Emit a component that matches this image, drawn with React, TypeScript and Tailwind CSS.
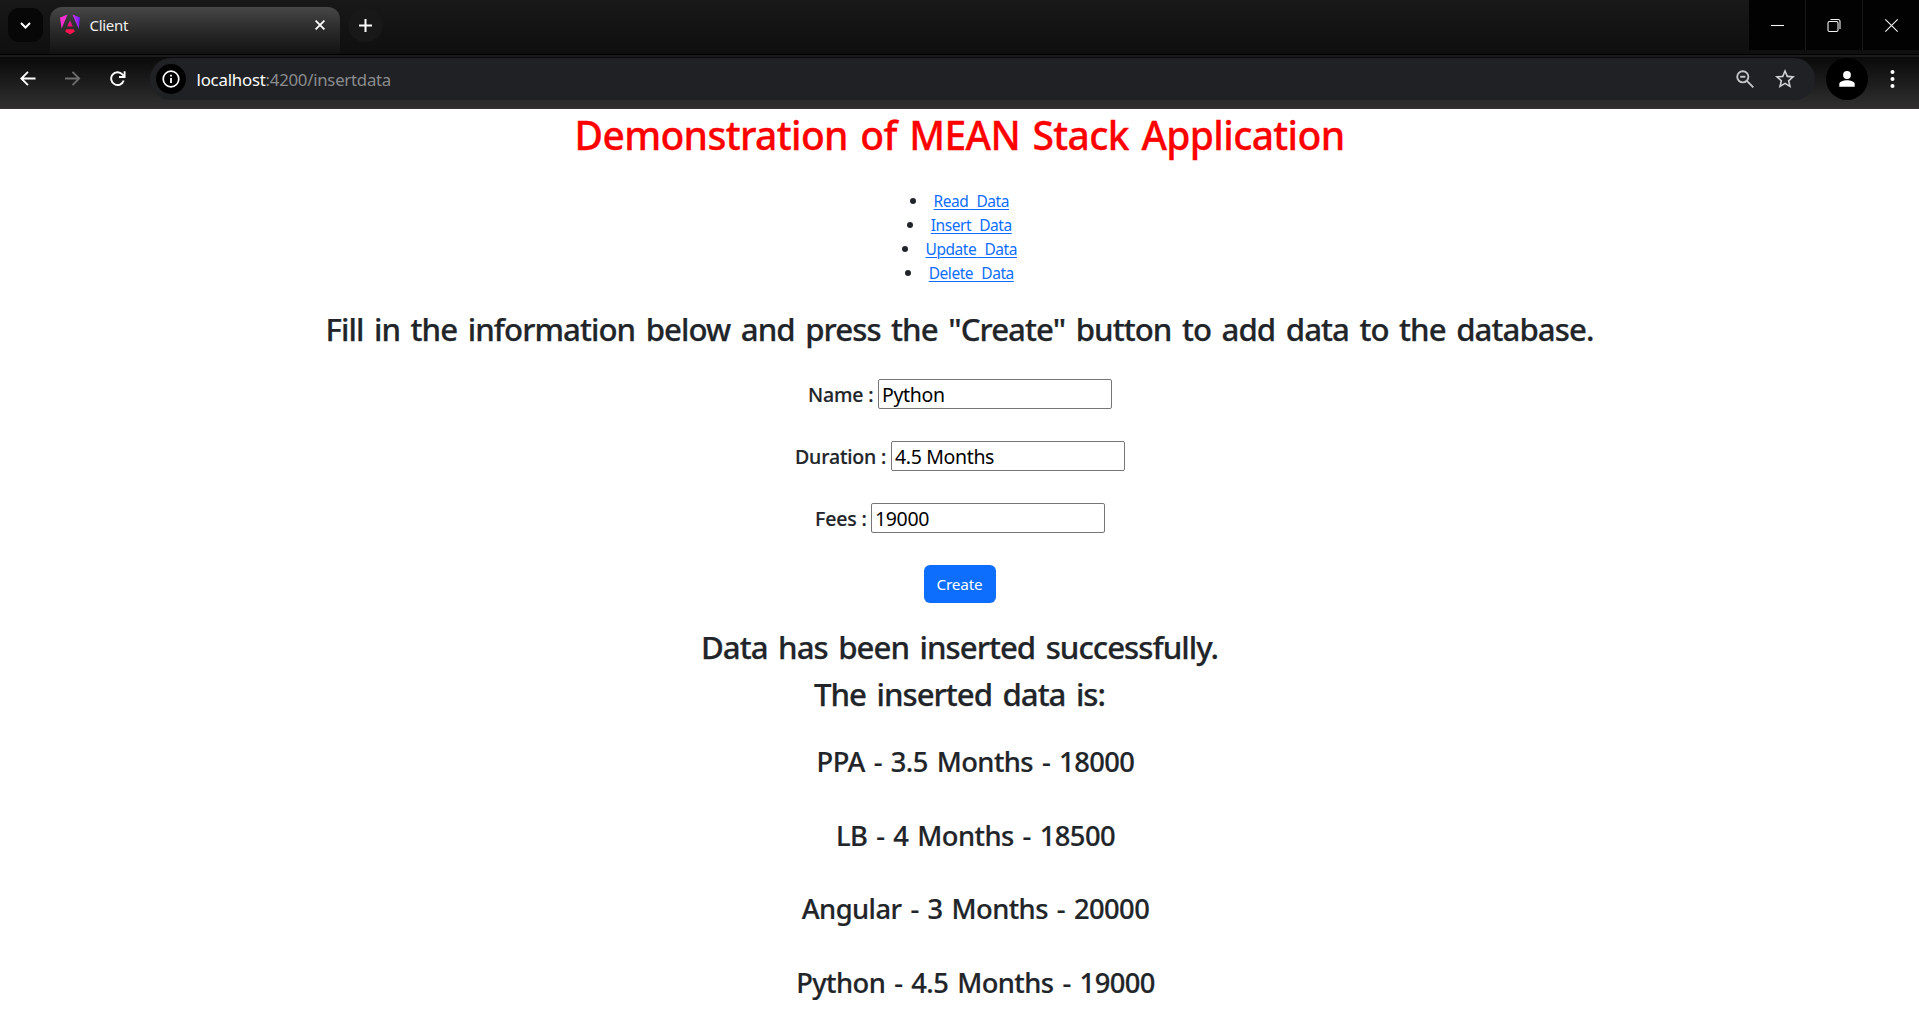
import type { ReactNode } from "react";

function AngularLogo() {
  return (
    <svg className="h-[21px] w-[20px] shrink-0" viewBox="0 0 20 21">
      <defs>
        <linearGradient id="ng" x1="0" y1="0.5" x2="1" y2="0.3">
          <stop offset="0" stopColor="#f62ccb" />
          <stop offset="0.4" stopColor="#b02ff0" />
          <stop offset="1" stopColor="#6a1bff" />
        </linearGradient>
        <linearGradient id="ngr" x1="0" y1="0" x2="0" y2="1">
          <stop offset="0" stopColor="#e81fb0" />
          <stop offset="1" stopColor="#ff0a6c" />
        </linearGradient>
      </defs>
      <path d="M0 3.6L7.6 0.4L1.6 14.6Z" fill="#f62fd0" />
      <path d="M12.4 0.4L20 3.6L18.8 15Z" fill="url(#ng)" />
      <path d="M10 6.4L12.8 12.6H7.2Z" fill="url(#ngr)" />
      <path d="M6.2 15.2H13.8L14.8 17.6L10 20.6L5.2 17.6Z" fill="#ff1450" />
    </svg>
  );
}

function TabStrip() {
  return (
    <div className="flex h-[54px] bg-gradient-to-b from-[#181818] to-[#0f0f0f]">
      <div className="ml-2 mt-2 flex h-[34px] w-[35px] items-center justify-center rounded-[11px] bg-[#070707]">
        <svg className="h-[7px] w-[11px]" viewBox="0 0 11 7" fill="none" stroke="#fff" strokeWidth="2">
          <path d="M1 1L5.5 5.5L10 1" />
        </svg>
      </div>
      <div className="ml-[7px] mt-[7px] flex h-[47px] w-[290px] items-start rounded-t-[12px] bg-gradient-to-b from-[#474747] via-[#2a2a2a] to-[#121212] pl-[10px] pt-[7px]">
        <AngularLogo />
        <span className="ml-[9.5px] text-[15px] leading-[22px] tracking-[-0.3px] text-[#f1f1f1]">Client</span>
        <svg className="ml-auto mr-[15px] mt-[6px] h-[10px] w-[10px]" viewBox="0 0 10 10" stroke="#fff" strokeWidth="1.8">
          <path d="M0.6 0.6L9.4 9.4M9.4 0.6L0.6 9.4" />
        </svg>
      </div>
      <div className="ml-2 mt-2 flex h-[34px] w-[35px] items-center justify-center rounded-full bg-[#181818]">
        <svg className="h-[13px] w-[13px]" viewBox="0 0 13 13" stroke="#fff" strokeWidth="2">
          <path d="M6.5 0V13M0 6.5H13" />
        </svg>
      </div>
      <div className="ml-auto flex h-[50px] gap-px bg-[#171717]">
        <WindowButton>
          <path d="M0 6.5H13" />
        </WindowButton>
        <WindowButton>
          <rect x="0" y="2.5" width="10" height="10" rx="1.5" />
          <path d="M2.5 0.5H10A2 2 0 0 1 12 2.5V10" />
        </WindowButton>
        <WindowButton>
          <path d="M0.3 0.3L12.7 12.7M12.7 0.3L0.3 12.7" />
        </WindowButton>
      </div>
    </div>
  );
}

function WindowButton({ children }: { children: ReactNode }) {
  return (
    <div className="flex h-[50px] w-[56px] items-center justify-center bg-[#020202]">
      <svg className="h-[13px] w-[13px] overflow-visible" viewBox="0 0 13 13" fill="none" stroke="#f4f4f4" strokeWidth="1.1">
        {children}
      </svg>
    </div>
  );
}

function Toolbar() {
  return (
    <div className="flex h-[52px] items-start border-b border-[#3b3636] bg-gradient-to-b from-[#0a0a0a] to-[#303030]">
      <svg className="ml-5 mt-[14px] h-[15px] w-[16px]" viewBox="0 0 16 15" fill="none" stroke="#fff" strokeWidth="1.8">
        <path d="M15.5 7.5H1.5M8 0.8L1.3 7.5L8 14.2" />
      </svg>
      <svg className="ml-[29px] mt-[14px] h-[15px] w-[16px]" viewBox="0 0 16 15" fill="none" stroke="#6e6e6e" strokeWidth="1.8">
        <path d="M0 7.5H14M7.5 0.8L14.2 7.5L7.5 14.2" />
      </svg>
      <svg className="ml-[29px] mt-[14px] h-[16px] w-[16px]" viewBox="0 0 16 16" fill="none" stroke="#fff" strokeWidth="1.9">
        <path d="M13.7 9.5A6.4 6.4 0 1 1 12.4 3.4L14.3 5.4" />
        <path d="M14.6 0.3V6H9" />
      </svg>
      <div className="ml-[24px] mt-px flex h-[42px] w-[1665px] items-center rounded-full bg-[#202124] pl-[6px]">
        <div className="flex h-[30px] w-[30px] items-center justify-center rounded-full bg-black">
          <svg className="h-[18px] w-[18px]" viewBox="0 0 18 18" fill="none" stroke="#fff" strokeWidth="1.7">
            <circle cx="9" cy="9" r="7.8" />
            <path d="M9 8V13M9 4.8V6.6" strokeWidth="1.8" />
          </svg>
        </div>
        <span className="ml-[10.5px] mt-0.5 text-[16.8px] leading-6 tracking-[-0.2px] text-white">
          localhost<span className="tracking-[-0.26px] text-[#8b8c8e]">:4200/insertdata</span>
        </span>
        <svg className="ml-auto h-[18px] w-[18px]" viewBox="0 0 18 18" fill="none" stroke="#c4c5c7" strokeWidth="1.9">
          <circle cx="6.8" cy="6.8" r="5.6" />
          <path d="M10.9 10.9L17.3 17.3M4.2 6.8H9.4" />
        </svg>
        <svg className="ml-[21px] mr-[20px] h-[20px] w-[20px]" viewBox="2 2 20 20" fill="#d0d1d3">
          <path d="M22 9.24l-7.19-.62L12 2 9.19 8.63 2 9.24l5.46 4.73L5.82 21 12 17.27 18.18 21l-1.63-7.03L22 9.24zM12 15.4l-3.76 2.27 1-4.28-3.32-2.88 4.38-.38L12 6.1l1.71 4.04 4.38.38-3.32 2.88 1 4.28L12 15.4z" />
        </svg>
      </div>
      <div className="ml-[11px] mt-px flex h-[42px] w-[42px] items-center justify-center rounded-full bg-black">
        <svg className="h-[16px] w-[16px]" viewBox="0 0 16 16" fill="#fff">
          <circle cx="8" cy="4" r="3.9" />
          <path d="M0.3 15.7V13C0.3 10.5 5 9.3 8 9.3S15.7 10.5 15.7 13V15.7Z" />
        </svg>
      </div>
      <svg className="ml-[22px] mt-[13px] h-[18px] w-[5px]" viewBox="0 0 5 18" fill="#fff">
        <circle cx="2.5" cy="2" r="2" />
        <circle cx="2.5" cy="9" r="2" />
        <circle cx="2.5" cy="16" r="2" />
      </svg>
    </div>
  );
}

const links = ["Read", "Insert", "Update", "Delete"];

const fields = [
  { label: "Name :", value: "Python", width: "w-[71px]" },
  { label: "Duration :", value: "4.5 Months", width: "w-[97px]" },
  { label: "Fees :", value: "19000", width: "w-[57px]" },
];

const courses = [
  "PPA - 3.5 Months - 18000",
  "LB - 4 Months - 18500",
  "Angular - 3 Months - 20000",
  "Python - 4.5 Months - 19000",
];

export default function App() {
  return (
    <div className="h-[1009px] w-[1919px] overflow-hidden bg-white font-['Noto_Sans',sans-serif] text-[#212529]">
      <TabStrip />
      <div className="h-[3px] border-t border-black bg-[#1b1b1b]" />
      <Toolbar />
      <main className="flex flex-col items-center">
        <h1 className="mt-0.5 h-[48px] text-[39px] font-medium leading-[48px] tracking-[-0.65px] text-[#ff0000] [-webkit-text-stroke:0.3px] [word-spacing:3px]">
          Demonstration of MEAN Stack Application
        </h1>
        <ul className="mt-[30px]">
          {links.map((name) => (
            <li key={name} className="flex h-6 items-center justify-center">
              <span className="mr-[17.5px] h-[6px] w-[6px] rounded-full bg-[#212529]" />
              <a className="text-[15.5px] leading-6 tracking-[-0.45px] text-[#0d6efd] underline decoration-1 underline-offset-2 [word-spacing:0.5px]">
                {name}&nbsp; Data
              </a>
            </li>
          ))}
        </ul>
        <h2 className="mt-[25px] h-[38px] whitespace-nowrap text-[31.2px] font-medium leading-[38px] tracking-[-0.93px] [-webkit-text-stroke:0.25px] [word-spacing:3.3px]">
          Fill in the information below and press the "Create" button to add data to the database.
        </h2>
        <form className="mt-[31px] flex flex-col items-center gap-8">
          {fields.map((field) => (
            <div key={field.label} className="flex items-center">
              <label className={`${field.width} mt-0.5 whitespace-nowrap pl-px text-[19.5px] font-medium leading-[28px] tracking-[-0.15px] [-webkit-text-stroke:0.2px]`}>
                {field.label}
              </label>
              <input
                readOnly
                value={field.value}
                className="h-[30px] w-[234px] rounded-[2px] border border-[#767676] bg-white px-[3px] text-[19.5px] leading-[26px] tracking-[-0.35px] text-black outline-none"
              />
            </div>
          ))}
          <button type="button" className="h-[38px] w-[72px] rounded-[6px] bg-[#0d6efd] text-[15.3px] leading-[38px] tracking-[-0.15px] text-white">
            Create
          </button>
        </form>
        <h2 className="mt-[25px] h-[47px] text-[31.2px] font-medium leading-[38px] tracking-[-0.96px] [-webkit-text-stroke:0.25px] [word-spacing:3.3px]">
          Data has been inserted successfully.
        </h2>
        <h2 className="h-[39px] text-[31.2px] font-medium leading-[38px] tracking-[-0.98px] [-webkit-text-stroke:0.25px] [word-spacing:3.3px]">
          The inserted data is:
        </h2>
        <ul className="mt-[31px] pl-8 text-center">
          {courses.map((course) => (
            <li key={course} className="mb-10 h-[33.6px] text-[27.3px] font-medium leading-[33.6px] tracking-[-0.56px] [-webkit-text-stroke:0.2px] [word-spacing:2.4px]">
              {course}
            </li>
          ))}
        </ul>
      </main>
    </div>
  );
}
